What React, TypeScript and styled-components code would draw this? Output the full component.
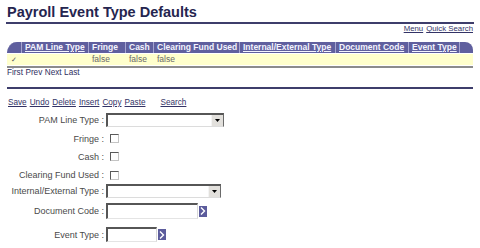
import styled, { createGlobalStyle } from 'styled-components';

const GlobalStyle = createGlobalStyle`
  html, body {
    margin: 0;
    padding: 0;
    background: #fff;
  }
  body {
    font-family: "Liberation Sans", Arial, sans-serif;
  }
`;

const COLS = '14px 67px 37px 28px 86px 96px 73px 51px 14px';

const Page = styled.div`
  width: 468px;
  padding: 0 6px;
`;

const Title = styled.h1`
  margin: 4px 0 0;
  padding: 0 0 1px 1px;
  font-size: 14.5px;
  line-height: 17px;
  font-weight: bold;
  color: #25254f;
  border-bottom: 2px solid #3d3d6b;
`;

const TopLinks = styled.div`
  display: flex;
  justify-content: flex-end;
  gap: 3px;
  padding-right: 1px;
  font-size: 7.8px;
  line-height: 9px;
`;

const Link = styled.a<{ $gap?: number }>`
  color: #333366;
  text-decoration: underline;
  cursor: pointer;
  margin-left: ${(p) => p.$gap ?? 0}px;
`;

const Header = styled.div`
  display: grid;
  grid-template-columns: ${COLS};
  margin: 9px 1px 0;
`;

const HeadCell = styled.div<{ $edge?: 'left' | 'right'; $link?: boolean }>`
  height: 11px;
  line-height: 11px;
  padding-left: 3px;
  background: #5f5f9e;
  border-left: 1px solid ${(p) => (p.$edge === 'left' ? '#5f5f9e' : '#a5a5d0')};
  border-top-left-radius: ${(p) => (p.$edge === 'left' ? '10px 11px' : '0')};
  border-top-right-radius: ${(p) => (p.$edge === 'right' ? '8px' : '0')};
  color: #f4f4ff;
  font-size: 8.5px;
  font-weight: bold;
  white-space: nowrap;
  overflow: hidden;
  text-decoration: ${(p) => (p.$link ? 'underline' : 'none')};
`;

const DataRow = styled.div`
  display: grid;
  grid-template-columns: ${COLS};
  margin: 1px 1px 0;
  height: 11px;
  background: #ffffcc;
`;

const DataCell = styled.div<{ $center?: boolean }>`
  padding-left: ${(p) => (p.$center ? 0 : 4)}px;
  text-align: ${(p) => (p.$center ? 'center' : 'left')};
  font-size: 8.5px;
  line-height: 11px;
  color: #6a6a6a;
  white-space: nowrap;
`;

const Check = styled.span`
  font-family: "DejaVu Sans", sans-serif;
  font-size: 7px;
  color: #555;
`;

const Rule = styled.div<{ $color: string; $top: number }>`
  height: 2px;
  margin: ${(p) => p.$top}px 1px 0;
  background: ${(p) => p.$color};
`;

const Pager = styled.div`
  display: flex;
  gap: 2.5px;
  padding-left: 1px;
  font-size: 8.2px;
  line-height: 9px;
  color: #2e2e5e;
`;

const Toolbar = styled.div`
  display: flex;
  gap: 3px;
  margin-top: 9px;
  padding-left: 2px;
  font-size: 8.2px;
  line-height: 9px;
`;

const Form = styled.div`
  margin-top: 3px;
`;

const Row = styled.div<{ $h: number }>`
  display: grid;
  grid-template-columns: 100px 1fr;
  align-items: center;
  height: ${(p) => p.$h}px;
`;

const Label = styled.div`
  text-align: right;
  padding-right: 2px;
  font-size: 9px;
  color: #4a4a4a;
  white-space: nowrap;
`;

const Control = styled.div`
  display: flex;
  align-items: center;
`;

const Select = styled.div<{ $w: number }>`
  box-sizing: border-box;
  display: flex;
  justify-content: flex-end;
  width: ${(p) => p.$w}px;
  height: 14px;
  background: #fff;
  border-style: solid;
  border-width: 2px 1px 1px 2px;
  border-color: #565656 #6a6a6a #dcdcdc #565656;
`;

const Arrow = styled.div`
  display: flex;
  align-items: center;
  justify-content: center;
  width: 11px;
  background: #e2e0dc;
  border-left: 1px solid #f4f4f4;
`;

const Checkbox = styled.div`
  box-sizing: border-box;
  width: 9px;
  height: 9px;
  margin-left: 4px;
  background: #fff;
  border-style: solid;
  border-width: 1px;
  border-color: #5a5a5a #c4c4c4 #c4c4c4 #5a5a5a;
`;

const TextInput = styled.div<{ $w: number; $h: number }>`
  box-sizing: border-box;
  width: ${(p) => p.$w}px;
  height: ${(p) => p.$h}px;
  background: #fff;
  border-style: solid;
  border-width: 2px 1px 1px 2px;
  border-color: #565656 #d8d8d8 #e4e4e4 #565656;
`;

const Lookup = styled.div`
  display: flex;
  align-items: center;
  justify-content: center;
  width: 8px;
  height: 11px;
  margin-left: 1px;
  background: #5c5c9c;
`;

const headers: { text: string; link?: boolean }[] = [
  { text: 'PAM Line Type', link: true },
  { text: 'Fringe' },
  { text: 'Cash' },
  { text: 'Clearing Fund Used' },
  { text: 'Internal/External Type', link: true },
  { text: 'Document Code', link: true },
  { text: 'Event Type', link: true },
];

const DropArrow = () => (
  <svg width="5" height="3" viewBox="0 0 5 3">
    <path d="M0 0h5L2.5 3z" fill="#000" />
  </svg>
);

const Chevron = () => (
  <svg width="6" height="8" viewBox="0 0 6 8">
    <path d="M1 0.5L4.5 4 1 7.5" stroke="#fff" strokeWidth="1.4" fill="none" />
  </svg>
);

export default function App() {
  return (
    <>
      <GlobalStyle />
      <Page>
        <Title>Payroll Event Type Defaults</Title>
        <TopLinks>
          <Link>Menu</Link>
          <Link>Quick Search</Link>
        </TopLinks>

        <Header>
          <HeadCell $edge="left" />
          {headers.map((h) => (
            <HeadCell key={h.text} $link={h.link}>
              {h.text}
            </HeadCell>
          ))}
          <HeadCell $edge="right" />
        </Header>
        <DataRow>
          <DataCell $center>
            <Check>✓</Check>
          </DataCell>
          <DataCell />
          <DataCell>false</DataCell>
          <DataCell>false</DataCell>
          <DataCell>false</DataCell>
          <DataCell />
          <DataCell />
          <DataCell />
          <DataCell />
        </DataRow>
        <Rule $color="#8c8c8c" $top={1} />
        <Pager>
          <span>First</span>
          <span>Prev</span>
          <span>Next</span>
          <span>Last</span>
        </Pager>
        <Rule $color="#3d3d6b" $top={10} />

        <Toolbar>
          <Link>Save</Link>
          <Link>Undo</Link>
          <Link>Delete</Link>
          <Link>Insert</Link>
          <Link>Copy</Link>
          <Link>Paste</Link>
          <Link $gap={12}>Search</Link>
        </Toolbar>

        <Form>
          <Row $h={20}>
            <Label>PAM Line Type :</Label>
            <Control>
              <Select $w={118}>
                <Arrow>
                  <DropArrow />
                </Arrow>
              </Select>
            </Control>
          </Row>
          <Row $h={17}>
            <Label>Fringe :</Label>
            <Control>
              <Checkbox />
            </Control>
          </Row>
          <Row $h={19}>
            <Label>Cash :</Label>
            <Control>
              <Checkbox />
            </Control>
          </Row>
          <Row $h={18}>
            <Label>Clearing Fund Used :</Label>
            <Control>
              <Checkbox />
            </Control>
          </Row>
          <Row $h={14}>
            <Label>Internal/External Type :</Label>
            <Control>
              <Select $w={115}>
                <Arrow>
                  <DropArrow />
                </Arrow>
              </Select>
            </Control>
          </Row>
          <Row $h={26}>
            <Label>Document Code :</Label>
            <Control>
              <TextInput $w={92} $h={16} />
              <Lookup>
                <Chevron />
              </Lookup>
            </Control>
          </Row>
          <Row $h={21}>
            <Label>Event Type :</Label>
            <Control>
              <TextInput $w={51} $h={15} />
              <Lookup>
                <Chevron />
              </Lookup>
            </Control>
          </Row>
        </Form>
      </Page>
    </>
  );
}
